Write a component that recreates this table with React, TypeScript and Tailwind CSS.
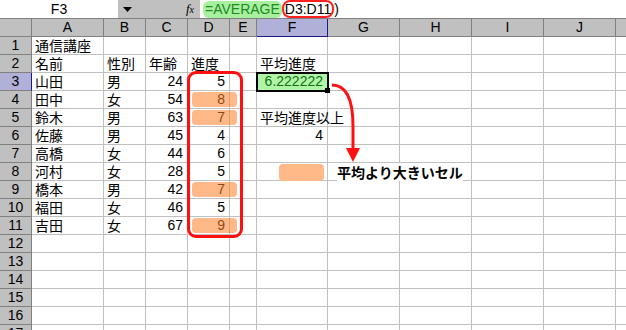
import React from "react";

const cols = [
  { k: "A", w: 72 },
  { k: "B", w: 42 },
  { k: "C", w: 42 },
  { k: "D", w: 42 },
  { k: "E", w: 27 },
  { k: "F", w: 71 },
  { k: "G", w: 72 },
  { k: "H", w: 72 },
  { k: "I", w: 72 },
  { k: "J", w: 72 },
  { k: "", w: 40 },
];

type Cell = { t: string; right?: boolean; green?: boolean };
const data: Record<number, Record<string, Cell>> = {
  1: { A: { t: "通信講座" } },
  2: { A: { t: "名前" }, B: { t: "性別" }, C: { t: "年齢" }, D: { t: "進度" }, F: { t: "平均進度" } },
  3: { A: { t: "山田" }, B: { t: "男" }, C: { t: "24", right: true }, D: { t: "5", right: true }, F: { t: "6.222222", right: true, green: true } },
  4: { A: { t: "田中" }, B: { t: "女" }, C: { t: "54", right: true }, D: { t: "8", right: true } },
  5: { A: { t: "鈴木" }, B: { t: "男" }, C: { t: "63", right: true }, D: { t: "7", right: true }, F: { t: "平均進度以上" } },
  6: { A: { t: "佐藤" }, B: { t: "男" }, C: { t: "45", right: true }, D: { t: "4", right: true }, F: { t: "4", right: true } },
  7: { A: { t: "高橋" }, B: { t: "女" }, C: { t: "44", right: true }, D: { t: "6", right: true } },
  8: { A: { t: "河村" }, B: { t: "女" }, C: { t: "28", right: true }, D: { t: "5", right: true } },
  9: { A: { t: "橋本" }, B: { t: "男" }, C: { t: "42", right: true }, D: { t: "7", right: true } },
  10: { A: { t: "福田" }, B: { t: "女" }, C: { t: "46", right: true }, D: { t: "5", right: true } },
  11: { A: { t: "吉田" }, B: { t: "女" }, C: { t: "67", right: true }, D: { t: "9", right: true } },
};

const font = { fontFamily: '"Noto Sans CJK JP", "Liberation Sans", sans-serif' };
const latin = { fontFamily: '"Liberation Sans", Arial, sans-serif' };

export default function App() {
  const rows = Array.from({ length: 17 }, (_, i) => i + 1);
  return (
    <div className="relative w-[626px] h-[330px] overflow-hidden bg-white text-[14px] text-black" style={font}>
      {/* formula bar */}
      <div className="flex h-[19px] border-b border-[#808080] bg-white leading-[18px]" style={latin}>
        <div className="w-[118px] text-center">F3</div>
        <div className="w-[82px] bg-[#c0c0c0] flex items-center justify-between pl-[5px] pr-[6px]">
          <svg width="9" height="5" viewBox="0 0 9 5">
            <polygon points="0,0 9,0 4.5,5" fill="#000" />
          </svg>
          <span className="italic text-[13px]" style={{ fontFamily: '"Liberation Serif", serif' }}>
            <i>f</i>
            <span className="text-[10px]">x</span>
          </span>
        </div>
        <div className="flex items-center pl-[3px]">
          <span className="bg-[#a8f0a0] text-[#208a20] rounded-[6px] px-[2px] leading-[17px]">=AVERAGE</span>
          <span className="border-2 border-[#ff2020] rounded-[8px] px-[1px] leading-[14px]">D3:D11</span>
          <span>)</span>
        </div>
      </div>
      {/* header row */}
      <div className="flex h-[18px] leading-[17px]" style={latin}>
        <div className="w-[32px] shrink-0 bg-[#c0c0c0] border-r border-b border-[#808080]" />
        {cols.map((c) => (
          <div
            key={c.k}
            className={
              c.k === "F"
                ? "shrink-0 text-center bg-[#b0b0d8] border-r border-b border-[#1a1a80]"
                : "shrink-0 text-center bg-[#c0c0c0] border-r border-b border-[#808080]"
            }
            style={{ width: c.w }}
          >
            {c.k}
          </div>
        ))}
      </div>
      {rows.map((r) => (
        <div key={r} className="flex h-[18px] leading-[17px]">
          <div
            className={
              r === 3
                ? "w-[32px] shrink-0 text-center bg-[#b0b0d8] border-r border-b border-r-[#1a1a80] border-b-[#808080]"
                : "w-[32px] shrink-0 text-center bg-[#c0c0c0] border-r border-b border-[#808080]"
            }
            style={latin}
          >
            {r}
          </div>
          {cols.map((c) => {
            const cell = data[r]?.[c.k];
            return (
              <div
                key={c.k}
                className={
                  "shrink-0 border-r border-b border-[#c0c0c0] whitespace-nowrap " +
                  (cell?.right ? "text-right pr-[4px] " : "pl-[3px] ") +
                  (cell?.green ? "bg-[#b0f4a8] text-[#107010] " : "") +
                  (cell && !cell.right ? "relative z-[1]" : "")
                }
                style={cell?.right ? { width: c.w, ...latin } : { width: c.w }}
              >
                {cell?.t}
              </div>
            );
          })}
        </div>
      ))}

      {/* orange highlights */}
      {[4, 5, 9, 11].map((r) => (
        <div
          key={r}
          className="absolute left-[192px] w-[45px] h-[15px] rounded-[4px] bg-[rgba(255,128,40,0.55)] z-[2]"
          style={{ top: 37 + 18 * (r - 1) + 1 }}
        />
      ))}
      {/* red rounded rect around D3:D11 */}
      <div className="absolute left-[187px] top-[71px] w-[56px] h-[167px] border-[3px] border-[#ff1010] rounded-[9px] z-[3]" />
      {/* F3 selection */}
      <div className="absolute left-[256px] top-[72px] w-[73px] h-[20px] border-2 border-black z-[3]" />
      <div className="absolute left-[325px] top-[88px] w-[5px] h-[5px] bg-black z-[4]" />
      {/* arrow */}
      <svg className="absolute left-0 top-0 z-[4]" width="626" height="330">
        <path d="M332 85 C 346 85, 353 100, 353 126 L 353 150" stroke="#ff1010" strokeWidth="3" fill="none" />
        <polygon points="346,148 360,148 353,162" fill="#ff1010" />
      </svg>
      {/* legend */}
      <div className="absolute left-[279px] top-[164px] w-[45px] h-[17px] rounded-[4px] bg-[#ffb888] z-[2]" />
      <div className="absolute left-[337px] top-[163px] leading-[18px] font-bold text-[14px] z-[2] bg-white whitespace-nowrap">
        平均より大きいセル
      </div>
    </div>
  );
}
